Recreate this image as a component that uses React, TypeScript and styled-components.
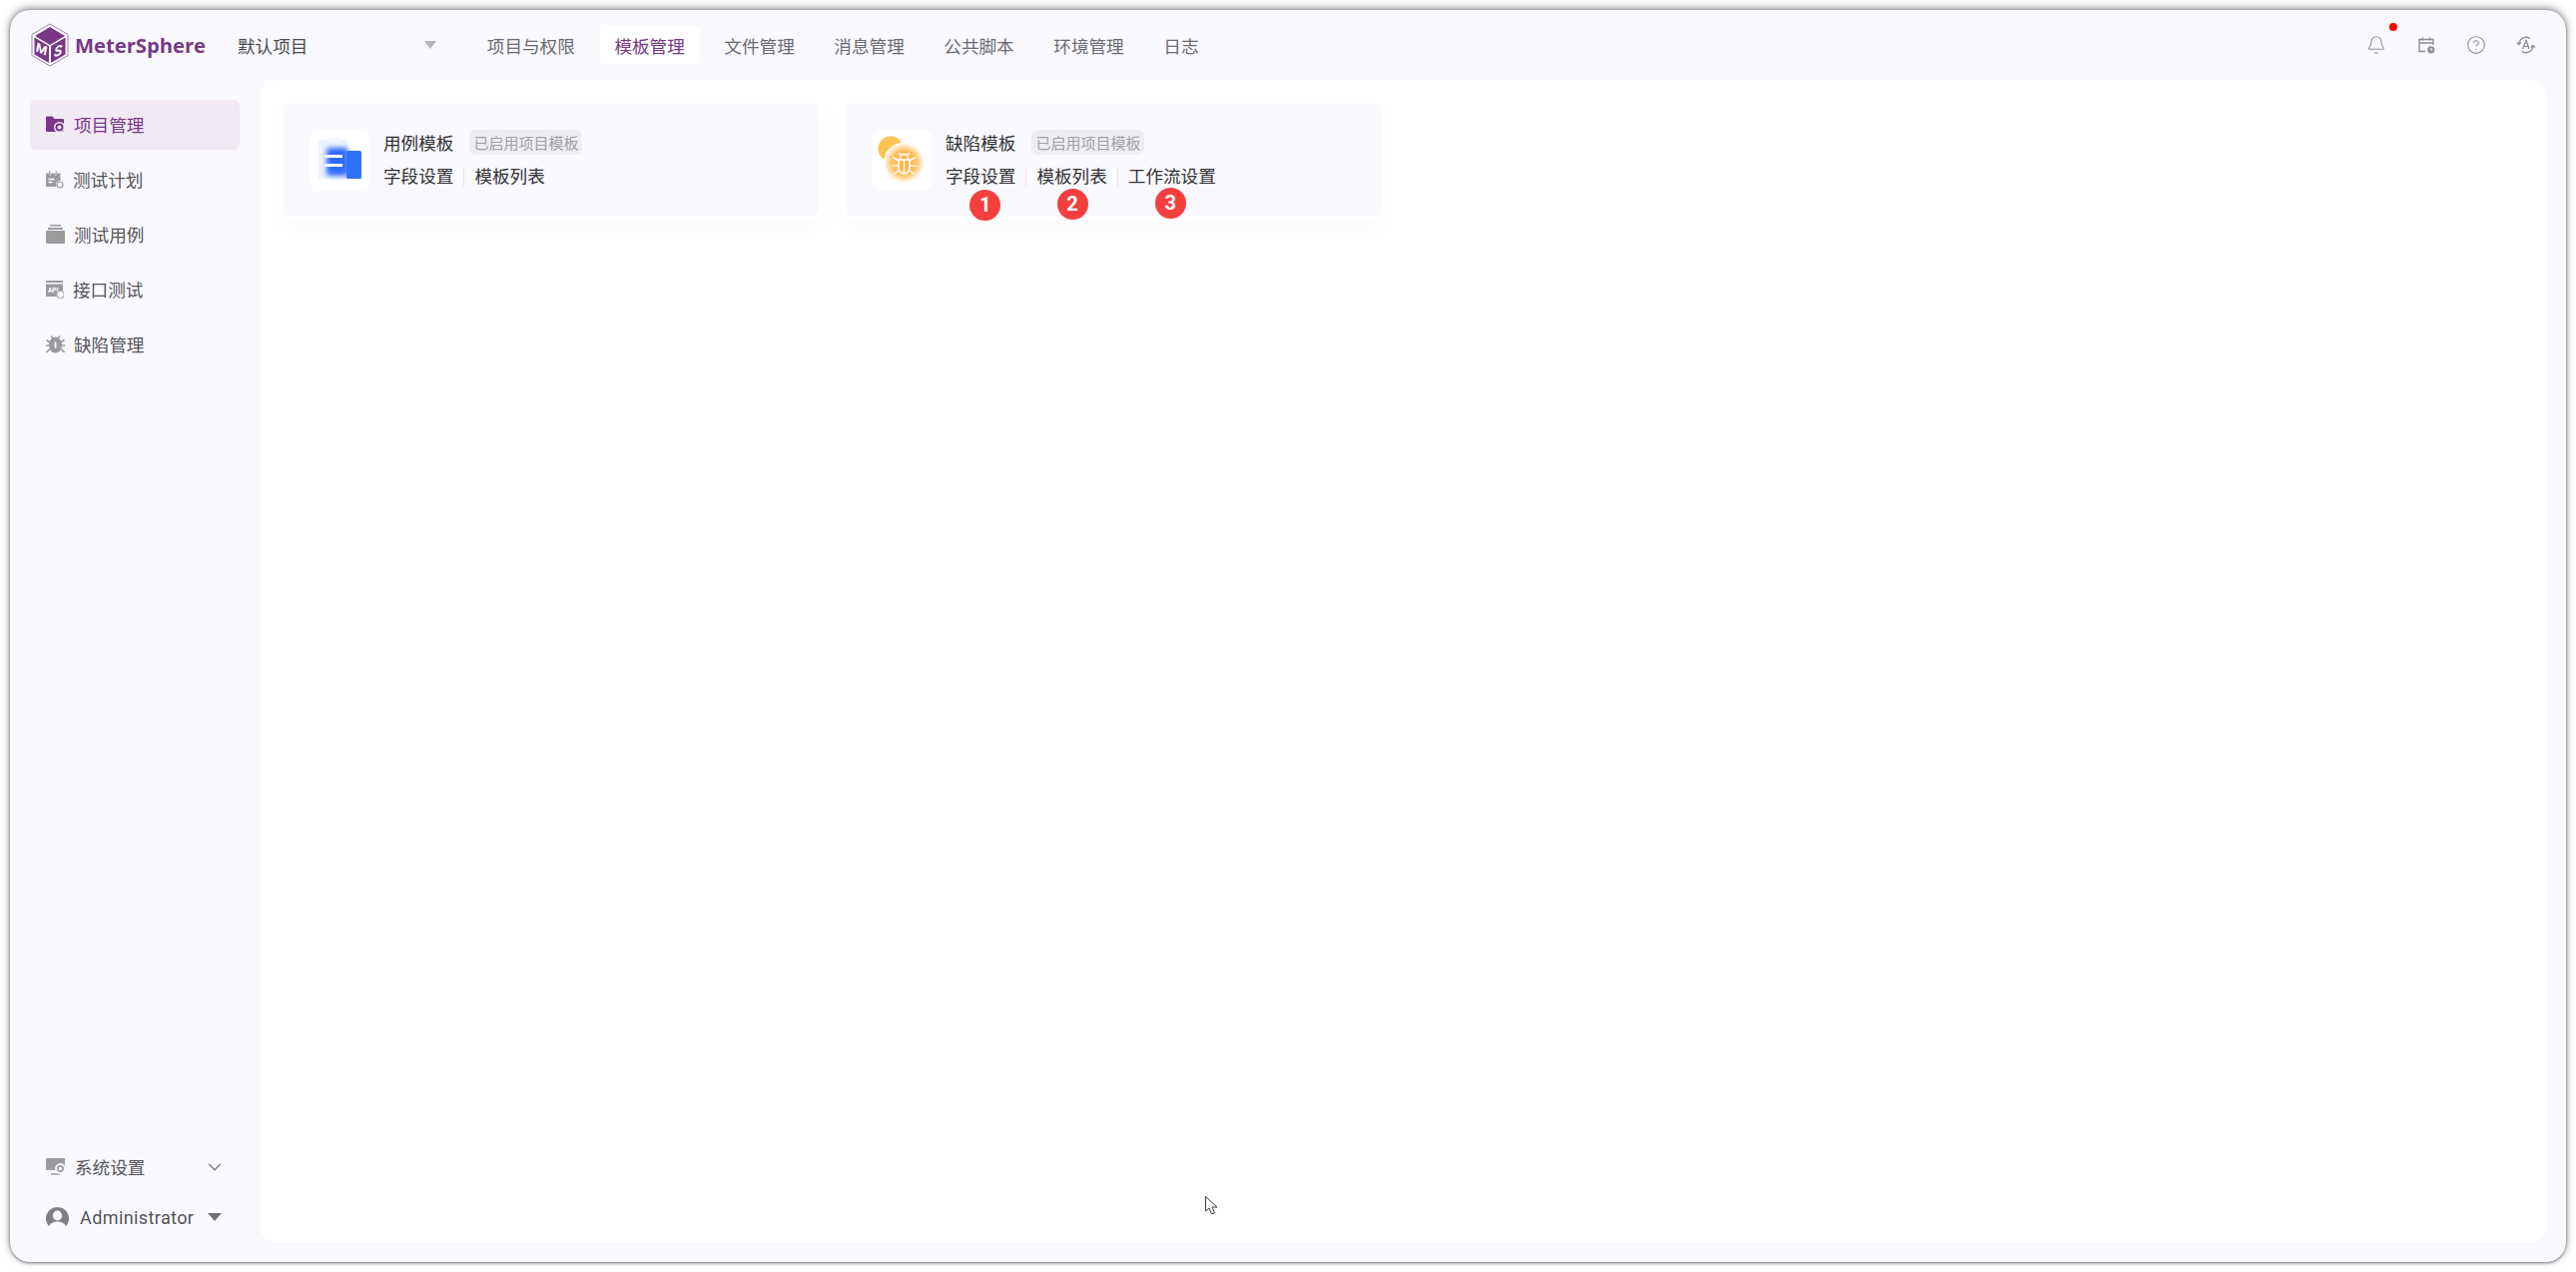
import React from "react";
import styled, { createGlobalStyle } from "styled-components";
import { ChevronDown, CircleHelp, Bell } from "lucide-react";

const Global = createGlobalStyle`
  html, body { margin: 0; padding: 0; height: 100%; background: #fff; }
  body { font-family: Roboto, "Noto Sans CJK SC", sans-serif; font-size: 17.6px; color: #323233; }
  #root { height: 100%; }
  * { box-sizing: border-box; }
`;

const Page = styled.div`
  position: relative;
  width: 2580px;
  height: 1274px;
  padding: 10px;
  overflow: hidden;
  background: #fff;
`;

const Window = styled.div`
  width: 2560px;
  height: 1254px;
  border-radius: 20px;
  background: #f9f9fe;
  box-shadow: 0 -2px 9px rgba(0, 0, 0, 0.42), 0 1px 3px rgba(0, 0, 0, 0.45);
  display: flex;
  flex-direction: column;
`;

const Header = styled.header`
  height: 70px;
  display: flex;
  align-items: center;
  padding: 0 30px 0 21px;
  flex: none;
`;

const LogoBox = styled.div`
  width: 184px;
  display: flex;
  align-items: center;
  gap: 6px;
  flex: none;
`;

const LogoText = styled.span`
  font-family: "Open Sans", sans-serif;
  font-weight: 700;
  font-size: 20.2px;
  color: #783887;
`;

const ProjectSelect = styled.div`
  width: 202px;
  margin-left: 23px;
  padding-right: 3px;
  display: flex;
  align-items: center;
  justify-content: space-between;
  font-size: 17.6px;
  color: #4b4b4f;
  flex: none;
`;

const Caret = styled.span<{ $dark?: boolean }>`
  width: 0;
  height: 0;
  border-left: ${(p) => (p.$dark ? 7 : 6)}px solid transparent;
  border-right: ${(p) => (p.$dark ? 7 : 6)}px solid transparent;
  border-top: 8px solid ${(p) => (p.$dark ? "#737373" : "#b5b5b8")};
`;

const Nav = styled.nav`
  display: flex;
  gap: 10px;
  margin-left: 33px;
`;

const NavItem = styled.div<{ $active?: boolean }>`
  height: 38px;
  padding: 0 14.8px;
  display: flex;
  align-items: center;
  border-radius: 5px;
  font-size: 17.6px;
  color: ${(p) => (p.$active ? "#783887" : "#6b6b70")};
  background: ${(p) => (p.$active ? "#fff" : "transparent")};
`;

const Tools = styled.div`
  margin-left: auto;
  display: flex;
  align-items: center;
  gap: 30px;
  color: #8f8f92;
`;

const Tool = styled.div`
  position: relative;
  width: 20px;
  height: 20px;
  display: flex;
  align-items: center;
  justify-content: center;
`;

const RedDot = styled.span`
  position: absolute;
  top: -12px;
  left: 23px;
  width: 8px;
  height: 8px;
  border-radius: 50%;
  background: #f00;
`;

const Body = styled.div`
  flex: 1;
  min-height: 0;
  display: flex;
  padding: 0 20px 20px 0;
`;

const Sidebar = styled.aside`
  width: 250px;
  flex: none;
  display: flex;
  flex-direction: column;
  padding: 20px 20px 0 20px;
`;

const Menu = styled.div`
  display: flex;
  flex-direction: column;
  gap: 5px;
`;

const MenuItem = styled.div<{ $active?: boolean }>`
  height: 50px;
  padding: 0 15px 1px 16px;
  display: flex;
  align-items: center;
  gap: 9px;
  border-radius: 6px;
  font-size: 17.6px;
  color: ${(p) => (p.$active ? "#783887" : "#55555a")};
  background: ${(p) => (p.$active ? "#f1e9f4" : "transparent")};
`;

const SidebarFoot = styled.div`
  margin-top: auto;
  display: flex;
  flex-direction: column;
`;

const SettingsRow = styled.div`
  height: 50px;
  padding: 0 14px 1px 16px;
  display: flex;
  align-items: center;
  gap: 9px;
  color: #55555a;
  font-size: 17.6px;
`;

const ChevronWrap = styled.span`
  margin-left: auto;
  display: flex;
  color: #77777a;
`;

const UserRow = styled.div`
  height: 50px;
  padding: 0 18px 0 16px;
  display: flex;
  align-items: center;
  gap: 11px;
  color: #55555a;
  font-size: 18px;
`;

const UserName = styled.span`
  flex: 1;
  letter-spacing: 0.4px;
`;

const Main = styled.main`
  flex: 1;
  background: #fff;
  border-radius: 16px;
  padding: 24px;
  display: flex;
  align-items: flex-start;
  gap: 27px;
`;

const Card = styled.section`
  width: 536px;
  height: 112px;
  padding: 0 26px;
  display: flex;
  align-items: center;
  gap: 14px;
  background: #f9f9fe;
  border-radius: 6px;
  box-shadow: 0 0 0 4px #fff, 0 8px 20px rgba(120, 56, 135, 0.03);
`;

const IconBox = styled.div`
  width: 60px;
  height: 60px;
  border-radius: 7px;
  background: #fff;
  flex: none;
`;

const CardText = styled.div`
  display: flex;
  flex-direction: column;
  gap: 10px;
`;

const TitleRow = styled.div`
  height: 25px;
  display: flex;
  align-items: center;
  gap: 16px;
  font-size: 17.6px;
  color: #323233;
`;

const Tag = styled.span`
  height: 25px;
  padding: 0 4px;
  display: flex;
  align-items: center;
  border-radius: 6px;
  background: #eeeef2;
  color: #a0a0a4;
  font-size: 15px;
`;

const Links = styled.div`
  display: flex;
  align-items: center;
`;

const LinkItem = styled.span`
  position: relative;
  font-size: 17.6px;
  line-height: 25px;
  color: #323233;
  padding: 0 10px;
  &:first-child { padding-left: 0; }
`;

const Divider = styled.span`
  width: 1px;
  height: 18px;
  background: #e4e4e8;
`;

const Marker = styled.span<{ $up: number; $shift: number }>`
  position: absolute;
  left: 50%;
  top: ${(p) => 25 - p.$up}px;
  width: 31px;
  height: 31px;
  margin-left: ${(p) => p.$shift - 15}px;
  border-radius: 50%;
  background: #f43f3f;
  color: #fff;
  font-weight: 700;
  font-size: 20px;
  font-family: Roboto, sans-serif;
  display: flex;
  align-items: center;
  justify-content: center;
`;

const Cursor = styled.svg`
  position: absolute;
  left: 1206px;
  top: 1197px;
`;

const LogoIcon = () => (
  <svg width="38" height="44" viewBox="0 0 38 44">
    <path d="M19 1 37 11.5V32.5L19 43 1 32.5V11.5Z" fill="#fff" stroke="#a77bb3" strokeWidth="1" />
    <path d="M19 4 34 13 19 22 4 13Z" fill="#783887" />
    <path d="M3.5 14.5 18 23V40L3.5 31.5Z" fill="#783887" />
    <path d="M34.5 14.5 20 23V40L34.5 31.5Z" fill="#783887" />
    <text x="5" y="33" fontSize="13" fontWeight="700" fontStyle="italic" fill="#fff" fontFamily="Roboto" transform="skewY(24) translate(0 -7)">M</text>
    <text x="23" y="33" fontSize="14" fontWeight="700" fontStyle="italic" fill="#fff" fontFamily="Roboto" transform="skewY(-24) translate(0 12)">S</text>
  </svg>
);

const CalendarClock = () => (
  <svg width="18" height="18" viewBox="0 0 18 18" fill="none" stroke="currentColor" strokeWidth="1.4">
    <path d="M8 15.5H2V3.5h14V9" />
    <path d="M2 7h14M5.5 1.5v3M12.5 1.5v3" />
    <circle cx="13.8" cy="13.8" r="3.6" fill="currentColor" stroke="none" />
    <path d="M13.8 12v2h1.6" stroke="#fff" strokeWidth="1" />
  </svg>
);

const LangIcon = () => (
  <svg width="20" height="20" viewBox="0 0 20 20" fill="none" stroke="currentColor" strokeWidth="1.3">
    <path d="M3 9A7 7 0 0 1 14 3.600M17 11A7 7 0 0 1 6 16.400" />
    <path d="M1 7.500 3 9.500 5 7.500M15 12.500 17 10.500 19 12.500" />
    <path d="M6.800 14 10 5.600l3.200 8.400M8 11.300h4" />
  </svg>
);

const FolderGear = ({ color }: { color: string }) => (
  <svg width="19" height="18" viewBox="0 0 19 18">
    <path d="M0 1.5A1 1 0 0 1 1 .5h5.5l2 2.5H17a1 1 0 0 1 1 1V16H1a1 1 0 0 1-1-1Z" fill={color} />
    <circle cx="13.5" cy="11.5" r="5.5" fill="#f1e9f4" />
    <circle cx="13.5" cy="11.5" r="3" fill="none" stroke={color} strokeWidth="2" />
  </svg>
);

const PlanIcon = () => (
  <svg width="18" height="18" viewBox="0 0 18 18">
    <path d="M0 2.5h3V5h1.5V2.5h5V5H11V2.5h3.5V16H0Z" fill="#9b9b9e" />
    <path d="M2.5 8.5h6M2.5 11.5h4" stroke="#fff" strokeWidth="1.4" />
    <path d="M3.7 0v5M10.2 0v5" stroke="#9b9b9e" strokeWidth="1" />
    <circle cx="14" cy="14" r="4" fill="#f9f9fe" />
    <circle cx="14" cy="14" r="3" fill="none" stroke="#9b9b9e" strokeWidth="1.2" />
  </svg>
);

const CaseIcon = () => (
  <svg width="19" height="19" viewBox="0 0 19 19" fill="#9b9b9e">
    <rect x="4" y="0" width="11" height="1.6" />
    <rect x="2" y="3" width="15" height="2" />
    <path d="M1 6h17a1 1 0 0 1 1 1v11a1 1 0 0 1-1 1H1a1 1 0 0 1-1-1V7a1 1 0 0 1 1-1Z" />
  </svg>
);

const ApiIcon = () => (
  <svg width="18" height="18" viewBox="0 0 18 18">
    <rect x="0" y="0" width="17" height="2" fill="#9b9b9e" />
    <path d="M0 3.5h17V16H0Z" fill="#9b9b9e" />
    <text x="2" y="11.5" fontSize="6.5" fontWeight="700" fill="#fff" fontFamily="Roboto">API</text>
    <circle cx="14.5" cy="14" r="3.8" fill="#f9f9fe" stroke="#9b9b9e" strokeWidth="1" />
  </svg>
);

const BugIcon = () => (
  <svg width="19" height="18" viewBox="0 0 19 18" fill="#9b9b9e" stroke="#9b9b9e">
    <ellipse cx="9.5" cy="9.5" rx="6.5" ry="8" stroke="none" />
    <path d="M5 .5 7.5 3M14 .5 11.5 3M.5 4.5 4 7M18.5 4.5 15 7M0 10h4M19 10h-4M.5 17 4 13.5M18.5 17 15 13.5" strokeWidth="1.6" fill="none" />
    <path d="M9.5 6.5v6" stroke="#f9f9fe" strokeWidth="1.8" />
  </svg>
);

const MonitorGear = () => (
  <svg width="20" height="18" viewBox="0 0 20 18">
    <path d="M0 0h19v12H0Z" fill="#9b9b9e" />
    <path d="M5 16h9" stroke="#9b9b9e" strokeWidth="1.5" />
    <circle cx="14.5" cy="10.5" r="5.4" fill="#f9f9fe" />
    <circle cx="14.5" cy="10.5" r="2.6" fill="none" stroke="#9b9b9e" strokeWidth="1.6" />
  </svg>
);

const Avatar = () => (
  <svg width="23" height="21" viewBox="0 0 23 21">
    <path d="M11.5 0A11.5 11.5 0 0 0 3 19.2c1.5-3.2 4.5-4.7 8.5-4.7s7 1.5 8.5 4.7A11.5 11.5 0 0 0 11.5 0Z" fill="#808083" />
    <ellipse cx="11.5" cy="8.5" rx="4.6" ry="5" fill="#f9f9fe" />
  </svg>
);

const CaseTemplateArt = () => (
  <svg width="60" height="60" viewBox="0 0 60 60">
    <defs>
      <filter id="caseBlur" x="-40%" y="-40%" width="180%" height="180%">
        <feGaussianBlur stdDeviation="2.5" />
      </filter>
    </defs>
    <rect x="9" y="10" width="29" height="39" rx="2" fill="#edf2fe" />
    <rect x="18" y="8" width="11" height="5" fill="#f2f5fe" />
    <rect x="17" y="18" width="22" height="28" rx="4" fill="#2f6bff" filter="url(#caseBlur)" />
    <rect x="37" y="21" width="15" height="28" rx="1.5" fill="#3370ff" />
    <rect x="15" y="25" width="18" height="3" fill="#fff" />
    <rect x="15" y="34" width="18" height="3" fill="#fff" />
  </svg>
);

const BugTemplateArt = () => (
  <svg width="60" height="60" viewBox="0 0 60 60">
    <defs>
      <radialGradient id="bugGlow">
        <stop offset="0%" stopColor="#ffae3b" />
        <stop offset="62%" stopColor="#ffc061" />
        <stop offset="100%" stopColor="#fff8ec" />
      </radialGradient>
    </defs>
    <circle cx="19" cy="19" r="12.5" fill="#ffc24f" />
    <circle cx="32.5" cy="33" r="20.5" fill="#fff" />
    <circle cx="32.5" cy="33" r="19.5" fill="url(#bugGlow)" />
    <g fill="none" stroke="#fff" strokeWidth="1.5" strokeLinecap="round">
      <path d="M27 30h11v7.5a5.5 6.5 0 0 1-11 0Z" />
      <path d="M28.5 30v-1.5a4 4 0 0 1 8 0V30M32.5 30v13" />
      <path d="M27.5 23.5l2 2M37.5 23.5l-2 2M22 28l5 3M43 28l-5 3M21 36h6M44 36h-6M22.5 44l5-3.5M42.500 44l-5-3.500" />
    </g>
  </svg>
);

const menus = [
  { label: "项目管理", icon: <FolderGear color="#783887" />, active: true },
  { label: "测试计划", icon: <PlanIcon /> },
  { label: "测试用例", icon: <CaseIcon /> },
  { label: "接口测试", icon: <ApiIcon /> },
  { label: "缺陷管理", icon: <BugIcon /> },
];

const navs = ["项目与权限", "模板管理", "文件管理", "消息管理", "公共脚本", "环境管理", "日志"];

export default function App() {
  return (
    <Page>
      <Global />
      <Window>
        <Header>
          <LogoBox>
            <LogoIcon />
            <LogoText>MeterSphere</LogoText>
          </LogoBox>
          <ProjectSelect>
            默认项目
            <Caret />
          </ProjectSelect>
          <Nav>
            {navs.map((n) => (
              <NavItem key={n} $active={n === "模板管理"}>{n}</NavItem>
            ))}
          </Nav>
          <Tools>
            <Tool><Bell size={20} strokeWidth={1.3} /><RedDot /></Tool>
            <Tool><CalendarClock /></Tool>
            <Tool><CircleHelp size={20} strokeWidth={1.3} /></Tool>
            <Tool><LangIcon /></Tool>
          </Tools>
        </Header>
        <Body>
          <Sidebar>
            <Menu>
              {menus.map((m) => (
                <MenuItem key={m.label} $active={m.active}>
                  {m.icon}
                  {m.label}
                </MenuItem>
              ))}
            </Menu>
            <SidebarFoot>
              <SettingsRow>
                <MonitorGear />
                系统设置
                <ChevronWrap><ChevronDown size={22} strokeWidth={1.3} /></ChevronWrap>
              </SettingsRow>
              <UserRow>
                <Avatar />
                <UserName>Administrator</UserName>
                <Caret $dark />
              </UserRow>
            </SidebarFoot>
          </Sidebar>
          <Main>
            <Card>
              <IconBox><CaseTemplateArt /></IconBox>
              <CardText>
                <TitleRow>用例模板<Tag>已启用项目模板</Tag></TitleRow>
                <Links>
                  <LinkItem>字段设置</LinkItem>
                  <Divider />
                  <LinkItem>模板列表</LinkItem>
                </Links>
              </CardText>
            </Card>
            <Card>
              <IconBox><BugTemplateArt /></IconBox>
              <CardText>
                <TitleRow>缺陷模板<Tag>已启用项目模板</Tag></TitleRow>
                <Links>
                  <LinkItem>字段设置<Marker $up={0} $shift={-1}>1</Marker></LinkItem>
                  <Divider />
                  <LinkItem>模板列表<Marker $up={1} $shift={0}>2</Marker></LinkItem>
                  <Divider />
                  <LinkItem>工作流设置<Marker $up={2} $shift={-2}>3</Marker></LinkItem>
                </Links>
              </CardText>
            </Card>
          </Main>
        </Body>
      </Window>
      <Cursor width="15" height="22" viewBox="0 0 15 22">
        <path d="M1.5 1.5V16L5 13l2.5 6 3-1.3L8 12h5Z" fill="#fff" stroke="#3a3a44" strokeWidth="1" />
      </Cursor>
    </Page>
  );
}
